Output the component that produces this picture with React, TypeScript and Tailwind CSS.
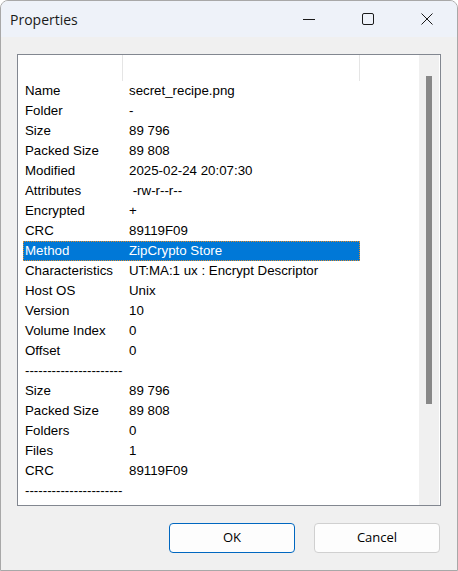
import React from 'react';

type Row = { label: string; value?: string; selected?: boolean };

const rows: Row[] = [
    { label: 'Name', value: 'secret_recipe.png' },
    { label: 'Folder', value: '-' },
    { label: 'Size', value: '89 796' },
    { label: 'Packed Size', value: '89 808' },
    { label: 'Modified', value: '2025-02-24 20:07:30' },
    { label: 'Attributes', value: '\u00a0-rw-r--r--' },
    { label: 'Encrypted', value: '+' },
    { label: 'CRC', value: '89119F09' },
    { label: 'Method', value: 'ZipCrypto Store', selected: true },
    { label: 'Characteristics', value: 'UT:MA:1 ux : Encrypt Descriptor' },
    { label: 'Host OS', value: 'Unix' },
    { label: 'Version', value: '10' },
    { label: 'Volume Index', value: '0' },
    { label: 'Offset', value: '0' },
    { label: '----------------------' },
    { label: 'Size', value: '89 796' },
    { label: 'Packed Size', value: '89 808' },
    { label: 'Folders', value: '0' },
    { label: 'Files', value: '1' },
    { label: 'CRC', value: '89119F09' },
    { label: '----------------------' },
];

const App: React.FC = () => {
    return (
        <div className="w-[458px] h-[571px] bg-white font-['Liberation_Sans',Arial,sans-serif]">
            <div className="flex flex-col h-full border border-[#a8a8a8] rounded-t-[8px] overflow-hidden bg-[#f0f0f0]">
                {/* Title bar */}
                <div className="flex items-center h-[36px] bg-[#eef2f9] shrink-0">
                    <div className="pl-[9px] text-[14px] text-[#1a1a1a] font-['Open_Sans',sans-serif] flex-1">Properties</div>
                    <div className="flex items-center h-full gap-[13px] mr-[7px]">
                        <div className="w-[46px] h-full flex items-center justify-center">
                            <svg width="12" height="12" viewBox="0 0 12 12"><path d="M0 6.5h12" stroke="#1a1a1a" strokeWidth="1" /></svg>
                        </div>
                        <div className="w-[46px] h-full flex items-center justify-center">
                            <svg width="12" height="12" viewBox="0 0 12 12"><rect x="0.5" y="0.5" width="11" height="11" rx="1.5" fill="none" stroke="#1a1a1a" strokeWidth="1" /></svg>
                        </div>
                        <div className="w-[46px] h-full flex items-center justify-center">
                            <svg width="12" height="12" viewBox="0 0 12 12"><path d="M0.5 0.5l11 11M11.5 0.5l-11 11" stroke="#1a1a1a" strokeWidth="1" /></svg>
                        </div>
                    </div>
                </div>

                {/* Body */}
                <div className="flex flex-col flex-1 px-[16px] pt-[17px]">
                    <div className="flex h-[452px] border border-[#828790] bg-white">
                        <div className="flex-1 flex flex-col text-[13.3px] text-black">
                            <div className="flex h-[26px] shrink-0">
                                <div className="w-[105px] border-r border-[#e5e5e5]" />
                                <div className="w-[237px] border-r border-[#e5e5e5]" />
                            </div>
                            {rows.map((r, i) => (
                                <div key={i} className="flex h-[20px] items-center">
                                    <div
                                        className={`flex items-center h-full ml-[5px] w-[337px] ${r.selected ? 'bg-[#0078d7] text-white outline-1 outline-dotted outline-[#e08a2a] -outline-offset-1' : ''}`}
                                    >
                                        <span className="pl-[2px] w-[106px] whitespace-nowrap">{r.label}</span>
                                        {r.value !== undefined && <span className="whitespace-nowrap">{r.value}</span>}
                                    </div>
                                </div>
                            ))}
                        </div>
                        {/* Scrollbar */}
                        <div className="w-[20px] bg-[#f0f0f0] flex justify-center pt-[21px]">
                            <div className="w-[6px] h-[328px] bg-[#888888]" />
                        </div>
                        <div className="w-[1px]" />
                    </div>

                    {/* Buttons */}
                    <div className="flex justify-end gap-[19px] mt-[17px] mr-[1px]">
                        <button className="w-[126px] h-[30px] rounded-[4px] border border-[#0067c0] bg-[#fdfdfd] text-[13px] text-black font-['Open_Sans',sans-serif]">OK</button>
                        <button className="w-[126px] h-[30px] rounded-[4px] border border-[#d0d0d0] bg-[#fdfdfd] text-[13px] text-black font-['Open_Sans',sans-serif]">Cancel</button>
                    </div>
                </div>
            </div>
        </div>
    );
};

export default App;
